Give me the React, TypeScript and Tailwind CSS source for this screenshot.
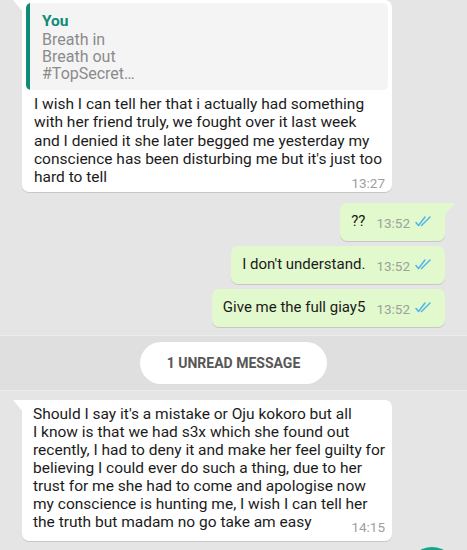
import React from "react";

const font = { fontFamily: "Roboto, 'Noto Sans', Arial, sans-serif" };

function Checks() {
  return (
    <svg width="17" height="11" viewBox="0 0 17 11" className="ml-[5px]">
      <path d="M1 6.5 L3.5 9.5 L10 1" fill="none" stroke="#4fb6ec" strokeWidth="1.5" strokeLinecap="round" strokeLinejoin="round" />
      <path d="M6.5 9.5 L15 1" fill="none" stroke="#4fb6ec" strokeWidth="1.5" strokeLinecap="round" strokeLinejoin="round" />
    </svg>
  );
}

function Out({ text, tail }: { text: string; tail?: boolean }) {
  return (
    <div className="self-end mr-[22px] relative">
      {tail && (
        <svg className="absolute right-[-10px] top-0" width="11" height="13" viewBox="0 0 11 13">
          <path d="M0 0 H11 L0 13 Z" fill="#e2f8cd" />
        </svg>
      )}
      <div
        className={`bg-[#e2f8cd] rounded-[7px] ${tail ? "rounded-tr-none" : ""} h-[38px] pl-[11px] pr-[13px] flex items-center shadow-[0_1px_0.5px_rgba(0,0,0,0.13)]`}
      >
        <span className="text-[15px] text-[#1b1b1b] leading-none">{text}</span>
        <span className="text-[13.5px] text-[#9aa49a] ml-[11px] mt-[4px] leading-none">13:52</span>
        <Checks />
      </div>
    </div>
  );
}

function Lines({ lines, time, lh }: { lines: string[]; time: string; lh: string }) {
  const last = lines[lines.length - 1];
  return (
    <div className={`text-[15.5px] ${lh} text-[#1b1b1b] whitespace-nowrap`}>
      {lines.slice(0, -1).map((l, i) => (
        <div key={i}>{l}</div>
      ))}
      <div className="flex justify-between items-end">
        <span>{last}</span>
        <span className="text-[13.5px] leading-[14px] text-[#a0a0a0] mb-[-3px]">{time}</span>
      </div>
    </div>
  );
}

export default function App() {
  return (
    <div className="w-[467px] h-[550px] bg-[#e5e5e5] overflow-hidden relative flex flex-col" style={font}>
      {/* first incoming bubble */}
      <div className="ml-[22px] w-[370px] relative">
        <svg className="absolute left-[-9px] top-0" width="10" height="12" viewBox="0 0 10 12">
          <path d="M10 0 H0 L10 12 Z" fill="#ffffff" />
        </svg>
        <div className="bg-white rounded-[7px] rounded-tl-none p-[4px] pb-[5px] shadow-[0_1px_0.5px_rgba(0,0,0,0.13)]">
          <div className="bg-[#f4f4f4] rounded-[5px] flex overflow-hidden h-[87px] -mt-[1px]">
            <div className="w-[4px] bg-[#0f8b78]" />
            <div className="pl-[12px] pt-[8px]">
              <div className="text-[15.5px] font-bold text-[#0f8b78] leading-[20px]">You</div>
              <div className="text-[16px] text-[#8b8b8b] leading-[17px]">
                Breath in
                <br />
                Breath out
                <br />
                #TopSecret…
              </div>
            </div>
          </div>
          <div className="pl-[8px] pr-[3px] pt-[5px]">
            <Lines
              time="13:27"
              lh="leading-[18.35px]"
              lines={[
                "I wish I can tell her that i actually had something",
                "with her friend truly, we fought over it last week",
                "and I denied it she later begged me yesterday my",
                "conscience has been disturbing me but it's just too",
                "hard to tell",
              ]}
            />
          </div>
        </div>
      </div>

      <div className="h-[11px]" />
      <div className="flex flex-col gap-[5px]">
        <Out text="??" tail />
        <Out text="I don't understand." />
        <Out text="Give me the full giay5" />
      </div>

      {/* unread band */}
      <div className="mt-[8px] h-[56px] bg-[#dfdfdf] border-t border-b border-[#ececec] flex items-center justify-center">
        <div className="w-[187px] h-[42px] bg-white rounded-full flex items-center justify-center">
          <span className="text-[14px] font-bold text-[#575757] leading-none">1 UNREAD MESSAGE</span>
        </div>
      </div>

      {/* last incoming bubble */}
      <div className="mt-[9px] ml-[22px] w-[370px] relative">
        <svg className="absolute left-[-9px] top-0" width="10" height="12" viewBox="0 0 10 12">
          <path d="M10 0 H0 L10 12 Z" fill="#ffffff" />
        </svg>
        <div className="bg-white rounded-[7px] rounded-tl-none pt-[5px] pb-[10px] pl-[11px] pr-[7px] shadow-[0_1px_0.5px_rgba(0,0,0,0.13)]">
          <Lines
            time="14:15"
            lh="leading-[18.1px]"
            lines={[
              "Should I say it's a mistake or Oju kokoro but all",
              "I know is that we had s3x which she found out",
              "recently, I had to deny it and make her feel guilty for",
              "believing I could ever do such a thing, due to her",
              "trust for me she had to come and apologise now",
              "my conscience is hunting me, I wish I can tell her",
              "the truth but madam no go take am easy",
            ]}
          />
        </div>
      </div>

      <div className="absolute left-[408px] top-[547px] w-[48px] h-[48px] rounded-full bg-[#12a58c]" />
    </div>
  );
}
